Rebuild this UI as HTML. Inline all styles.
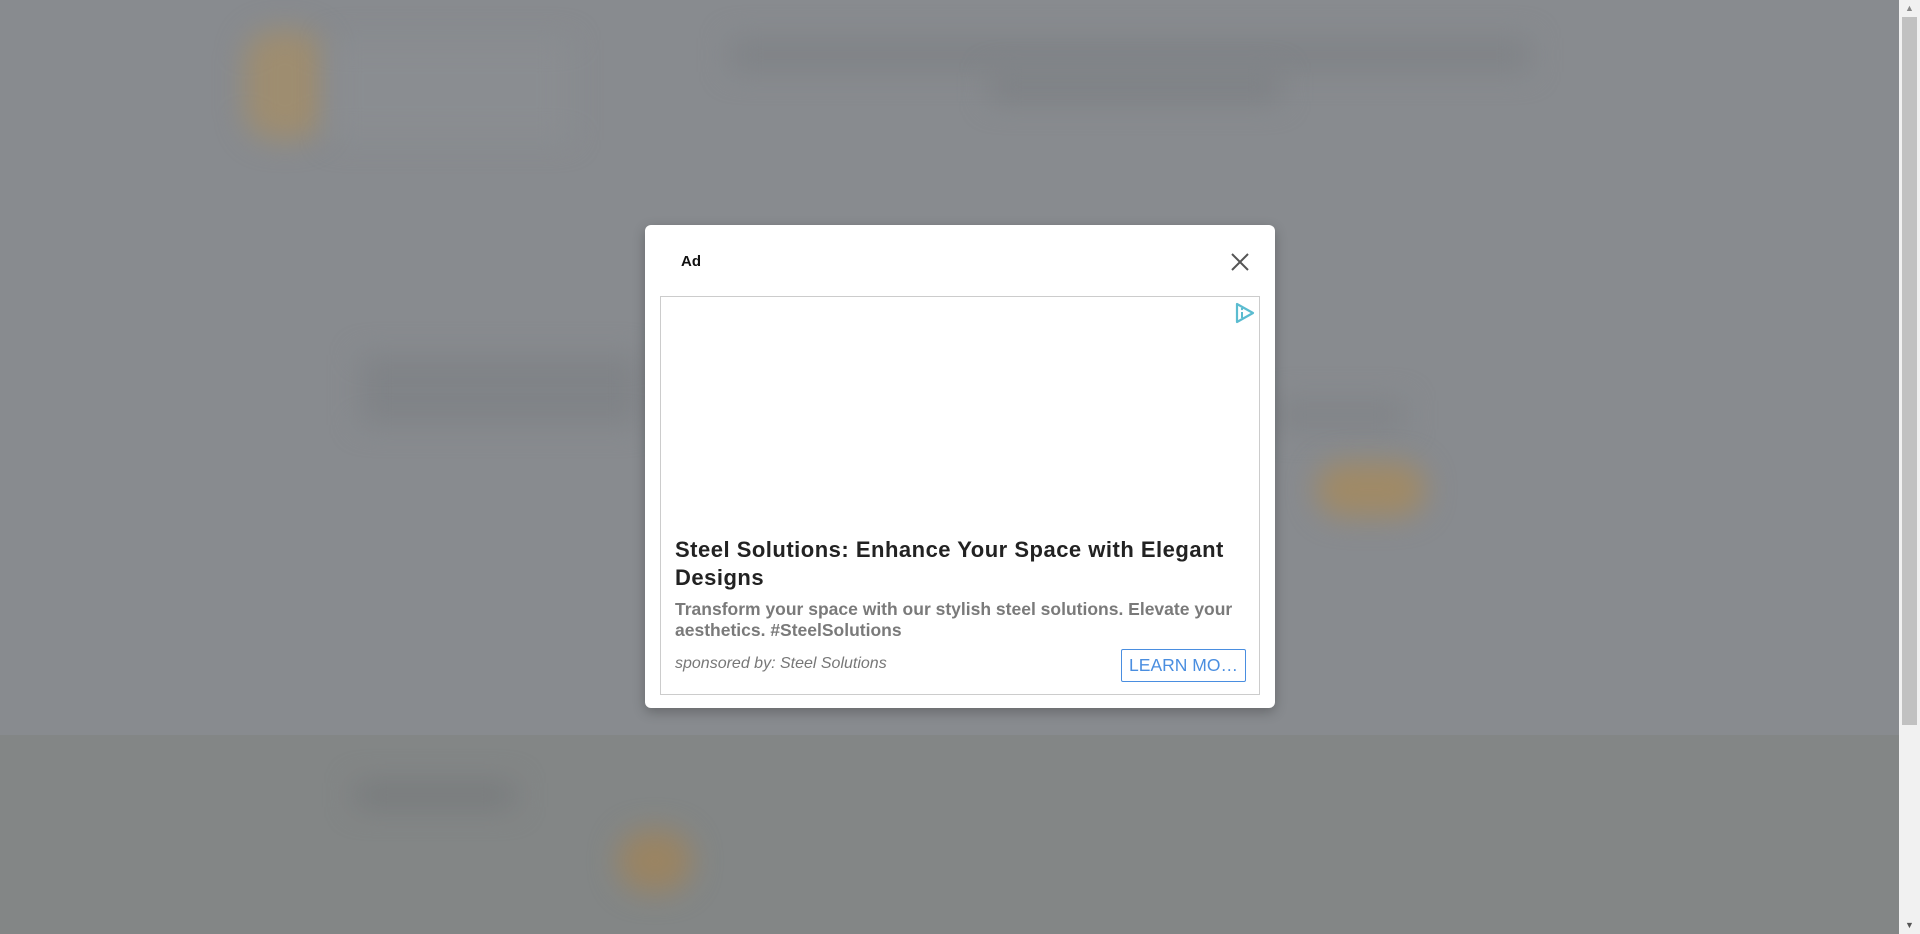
<!DOCTYPE html>
<html><head><meta charset="utf-8"><style>
*{margin:0;padding:0;box-sizing:border-box}
html,body{width:1920px;height:934px;overflow:hidden;background:#888b8f;font-family:"Liberation Sans",Arial,sans-serif;position:relative}
.b{position:absolute;filter:blur(14px)}
.modal{position:absolute;left:645px;top:225px;width:630px;height:483px;background:#fff;border-radius:6px;box-shadow:0 4px 12px rgba(0,0,0,.25)}
.ad{position:absolute;left:36px;top:28px;font-size:15px;font-weight:bold;color:#111}
.box{position:absolute;left:15px;top:71px;width:600px;height:399px;border:1px solid #ccc}
h1{position:absolute;left:14px;top:239px;width:580px;font-size:22px;line-height:28px;font-weight:bold;color:#222;letter-spacing:0.5px}
.d{position:absolute;left:14px;top:302px;width:575px;font-size:17.5px;line-height:21px;font-weight:bold;color:#7a7a7a}
.s{position:absolute;left:14px;top:358px;font-size:16px;font-style:italic;color:#777}
.btn{position:absolute;left:460px;top:352px;width:125px;height:33px;border:1px solid #4a8ee0;border-radius:2px;color:#4a8ee0;font-size:17.5px;line-height:31px;text-align:center}
.sb{position:absolute;left:1899px;top:0;width:21px;height:934px;background:#f1f1f1}
.th{position:absolute;left:1902px;top:17px;width:15px;height:708px;background:#c1c1c1}
</style></head><body>
<div class="b" style="left:0;top:735px;width:1899px;height:199px;background:#838686;filter:none"></div>
<div class="b" style="left:245px;top:30px;width:80px;height:110px;background:#9e8d70;border-radius:30px"></div>
<div class="b" style="left:330px;top:40px;width:240px;height:100px;background:#8a8d91"></div>
<div class="b" style="left:730px;top:38px;width:800px;height:34px;background:#808387"></div>
<div class="b" style="left:990px;top:72px;width:290px;height:30px;background:#7e8185"></div>
<div class="b" style="left:360px;top:355px;width:280px;height:70px;background:#808387"></div>
<div class="b" style="left:1275px;top:400px;width:130px;height:30px;background:#818488"></div>
<div class="b" style="left:1316px;top:462px;width:110px;height:55px;background:#a08a66;border-radius:30px"></div>
<div class="b" style="left:355px;top:782px;width:160px;height:26px;background:#787b7d"></div>
<div class="b" style="left:618px;top:830px;width:74px;height:62px;background:#9a8462;border-radius:30px"></div>
<div class="modal">
<div class="ad">Ad</div>
<svg style="position:absolute;left:585px;top:27px" width="20" height="20" viewBox="0 0 20 20"><path d="M2 2L18 18M18 2L2 18" stroke="#555" stroke-width="2"/></svg>
<div class="box">
<svg style="position:absolute;left:572px;top:4px" width="24" height="24" viewBox="0 0 24 24"><path d="M4 3L20 12L4 21Z" fill="none" stroke="#5bbcd0" stroke-width="2.2" stroke-linejoin="round"/><path d="M9 11v6" stroke="#5bbcd0" stroke-width="2"/><circle cx="9" cy="8" r="1.2" fill="#5bbcd0"/></svg>
<h1>Steel Solutions: Enhance Your Space with Elegant Designs</h1>
<div class="d">Transform your space with our stylish steel solutions. Elevate your aesthetics. #SteelSolutions</div>
<div class="s">sponsored by: Steel Solutions</div>
<div class="btn">LEARN MO…</div>
</div>
</div>
<div class="sb"></div><div class="th"></div>
<div style="position:absolute;left:1905px;top:3px;font-size:9px;color:#888">▲</div>
<div style="position:absolute;left:1905px;top:920px;font-size:9px;color:#555">▼</div>
</body></html>
